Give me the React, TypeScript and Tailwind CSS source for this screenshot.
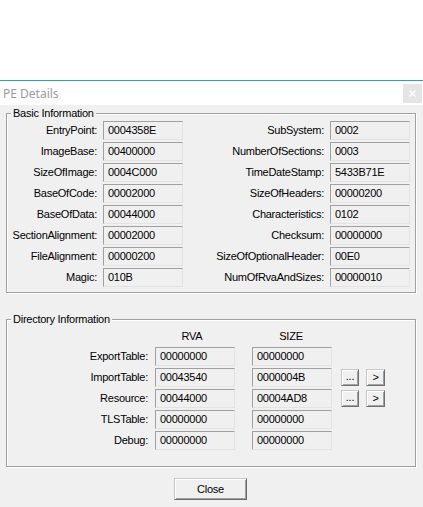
import React from 'react';

const basicLeft: [string, string][] = [
  ['EntryPoint', '0004358E'],
  ['ImageBase', '00400000'],
  ['SizeOfImage', '0004C000'],
  ['BaseOfCode', '00002000'],
  ['BaseOfData', '00044000'],
  ['SectionAlignment', '00002000'],
  ['FileAlignment', '00000200'],
  ['Magic', '010B'],
];

const basicRight: [string, string][] = [
  ['SubSystem', '0002'],
  ['NumberOfSections', '0003'],
  ['TimeDateStamp', '5433B71E'],
  ['SizeOfHeaders', '00000200'],
  ['Characteristics', '0102'],
  ['Checksum', '00000000'],
  ['SizeOfOptionalHeader', '00E0'],
  ['NumOfRvaAndSizes', '00000010'],
];

const directories: { name: string; rva: string; size: string; actions?: boolean }[] = [
  { name: 'ExportTable', rva: '00000000', size: '00000000' },
  { name: 'ImportTable', rva: '00043540', size: '0000004B', actions: true },
  { name: 'Resource', rva: '00044000', size: '00004AD8', actions: true },
  { name: 'TLSTable', rva: '00000000', size: '00000000' },
  { name: 'Debug', rva: '00000000', size: '00000000' },
];

// read-only edit control, sunken look
const EditBox = ({ value }: { value: string }) => (
  <div className="w-[80px] h-[19px] shrink-0 border border-t-[#a0a0a0] border-l-[#a0a0a0] border-r-[#e3e3e3] border-b-[#e3e3e3] bg-[#f0f0f0] pl-[4px] pt-[2px] leading-[13px] text-black">
    {value}
  </div>
);

const SmallButton = ({ children, className = '' }: { children: React.ReactNode; className?: string }) => (
  <button
    className={`h-[17px] shrink-0 flex items-center justify-center bg-[#f0f0f0] border border-t-[#c8c8c8] border-l-[#c8c8c8] border-r-[#707070] border-b-[#707070] shadow-[inset_1px_1px_0_#fff,inset_-1px_-1px_0_#a0a0a0] leading-[13px] text-black ${className}`}
  >
    {children}
  </button>
);

const GroupBox = ({ title, className = '', children }: { title: string; className?: string; children: React.ReactNode }) => (
  <fieldset
    className={`ml-[6px] w-[410px] border border-[#a0a0a0] shadow-[inset_1px_1px_0_#fff,1px_1px_0_#fff] ${className}`}
  >
    <legend className="ml-[4px] px-[2px] leading-[13px] bg-[#f0f0f0]">{title}</legend>
    {children}
  </fieldset>
);

export default function App() {
  return (
    <div className="w-[423px] h-[507px] overflow-hidden flex flex-col bg-white font-['Liberation_Sans',Arial,sans-serif] text-[11px] tracking-[-0.25px] text-black">
      {/* desktop above the window */}
      <div className="h-[80px] shrink-0 bg-white" />
      <div className="h-px shrink-0 bg-[#2aa3b5]" />

      {/* title bar (inactive) */}
      <div className="h-[24px] shrink-0 flex items-center justify-between bg-white">
        <span className="pl-[3px] pt-[2px] font-['Noto_Sans','Open_Sans',sans-serif] text-[12px] tracking-normal text-[#9a9a9a]">PE Details</span>
        <div className="mr-[1px] w-[19px] h-[19px] flex items-center justify-center bg-[#e5e5e5]">
          <svg width="7" height="7" viewBox="0 0 7 7">
            <path d="M0.5 0.5 L6.5 6.5 M6.5 0.5 L0.5 6.5" stroke="#ffffff" strokeWidth="1.3" />
          </svg>
        </div>
      </div>

      {/* dialog body */}
      <div className="flex-1 bg-[#f0f0f0] flex flex-col">
        <GroupBox title="Basic Information" className="mt-[2px] pb-[4px]">
          <div className="flex">
            <div className="flex flex-col">
              {basicLeft.map(([label, value]) => (
                <div key={label} className="h-[21px] flex items-center">
                  <span className="w-[90px] text-right">{label}:</span>
                  <div className="ml-[6px]">
                    <EditBox value={value} />
                  </div>
                </div>
              ))}
            </div>
            <div className="flex flex-col">
              {basicRight.map(([label, value]) => (
                <div key={label} className="h-[21px] flex items-center">
                  <span className="w-[141px] text-right">{label}:</span>
                  <div className="ml-[6px]">
                    <EditBox value={value} />
                  </div>
                </div>
              ))}
            </div>
          </div>
        </GroupBox>

        <GroupBox title="Directory Information" className="mt-[20px] pb-[15px]">
          <div className="h-[20px] flex items-center">
            <span className="ml-[145px] w-[80px] text-center">RVA</span>
            <span className="ml-[19px] w-[80px] text-center">SIZE</span>
          </div>
          {directories.map((d) => (
            <div key={d.name} className="h-[21px] flex items-center">
              <span className="w-[141px] text-right">{d.name}:</span>
              <div className="ml-[7px]">
                <EditBox value={d.rva} />
              </div>
              <div className="ml-[17px]">
                <EditBox value={d.size} />
              </div>
              {d.actions && (
                <div className="ml-[9px] flex gap-[7px]">
                  <SmallButton className="w-[18px] items-end pb-[2px]">...</SmallButton>
                  <SmallButton className="w-[19px]">&gt;</SmallButton>
                </div>
              )}
            </div>
          ))}
        </GroupBox>

        <div className="mt-[11px] flex">
          <button className="ml-[174px] w-[73px] h-[22px] bg-[#f0f0f0] border border-t-[#c8c8c8] border-l-[#c8c8c8] border-r-[#696969] border-b-[#696969] shadow-[inset_1px_1px_0_#fff,inset_-1px_-1px_0_#a0a0a0] text-[11px] text-black">
            Close
          </button>
        </div>
      </div>
    </div>
  );
}
